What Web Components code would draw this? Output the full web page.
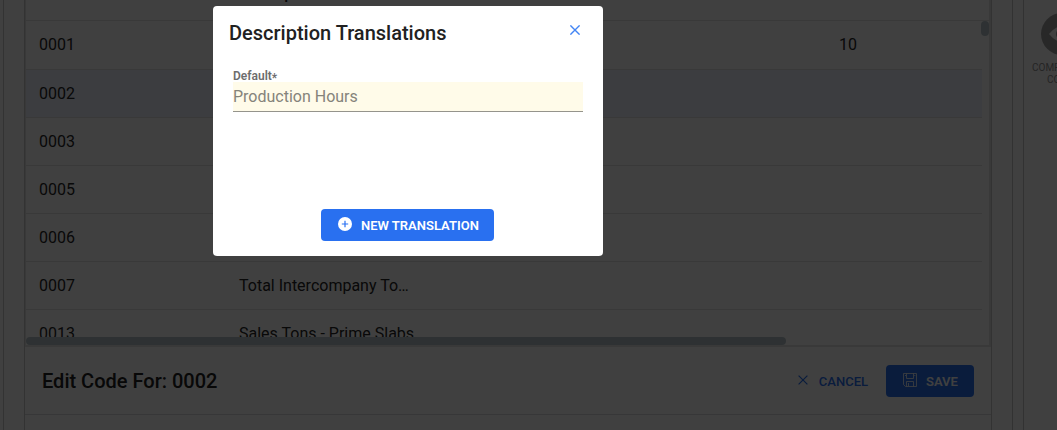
<!DOCTYPE html>
<html lang="en">
<head>
<meta charset="utf-8">
<title>Description Translations</title>
<style>
html,body{margin:0;height:100%;overflow:hidden;background:#fff;font-family:Roboto,sans-serif;color:#212121}
</style>
</head>
<body>
<app-shell></app-shell>
<script>
const define = (name, html) => customElements.define(name, class extends HTMLElement {
  constructor() {
    super();
    const t = document.createElement('template');
    t.innerHTML = html;
    this.attachShadow({mode: 'open'}).append(t.content.cloneNode(true));
  }
});

define('code-row', `<style>
:host{display:flex;box-sizing:border-box;height:48px;width:956px;border-bottom:1px solid #e2e2e4;font-size:16px;line-height:47px;color:#262626}
:host([first]){line-height:45px}
:host([selected]){background:#f0f4ff}
:host([header]){height:21px;width:964px;font-weight:500;line-height:20px;align-items:flex-end}
:host([header]) ::slotted(*){height:36px}
::slotted(*){box-sizing:border-box;flex:none;padding-left:13px;width:200px;white-space:nowrap}
</style><slot></slot>`);

define('code-table', `<style>
:host{display:block;position:relative;box-sizing:border-box;height:347px;border:solid #e2e2e2;border-width:0 2px 2px 1px;overflow:hidden}
.v,.h{position:absolute;background:#b8c4cc;border-radius:4px}
.v{right:0;top:21px;width:8px;height:15px}
.h{left:0;bottom:0;width:760px;height:8px}
.gap{height:1px}
</style><slot name="head"></slot><div class="gap"></div><slot></slot><div class="v"></div><div class="h"></div>`);

define('action-button', `<style>
:host{display:flex;box-sizing:border-box;align-items:center;height:32px;border-radius:4px;font-size:13px;font-weight:500;line-height:32px;color:#2970f3;white-space:nowrap}
:host([primary]){background:#2970f0;color:#fff;font-weight:600}
::slotted(svg){display:block;flex:none}
span{padding-top:1px}
</style><slot name="icon"></slot><span><slot></slot></span>`);

define('edit-bar', `<style>
:host{display:flex;align-items:center;box-sizing:border-box;height:68px;padding:1px 17px 0;border-bottom:1px solid #dcdce0}
h2{margin:0;flex:1;font-size:20px;font-weight:500;line-height:66px}
.cancel{margin-right:18px}.cancel svg{margin:0 11px 2px 0}
.save{width:88px;padding-left:17px}.save svg{margin:0 9px 2px 0}
</style>
<h2>Edit Code For: 0002</h2>
<action-button class="cancel"><svg slot="icon" width="10" height="10" viewBox="0 0 10 10" fill="none" stroke="currentColor" stroke-width="1.2"><path d="M.6.6l8.8 8.8M9.4.6L.6 9.4"/></svg>CANCEL</action-button>
<action-button class="save" primary><svg slot="icon" width="14" height="14" viewBox="0 0 14 14" fill="none" stroke="currentColor"><path d="M.5.5h13v13H2.5l-2-2zM3.5.5v5h7v-5M3.5 13.5v-5h7v5M5.5 10v3M2.5 2v1M11.8 2v1" stroke-opacity=".8"/></svg>SAVE</action-button>`);

define('side-rail', `<style>
:host{display:block;box-sizing:border-box;width:34px;border-left:1px solid #c8c8c8;overflow:hidden;font-size:10px;line-height:12px;color:#929292;padding-top:13px}
svg{display:block;margin-left:17px;width:42px;height:42px}
p{margin:0 0 0 8px;white-space:nowrap}p:first-of-type{margin-top:7px}p:last-child{margin-left:23px}
</style>
<svg viewBox="0 0 42 42"><circle cx="21" cy="21" r="21" fill="#a0a0a0"/><path d="M8 21Q21 5 34 21Q21 37 8 21Z" fill="#fff"/><circle cx="21" cy="21" r="6" fill="#a0a0a0"/></svg>
<p>COMP</p><p>CO</p>`);

define('translation-dialog', `<style>
:host{position:absolute;left:213px;top:6px;width:390px;height:250px;box-sizing:border-box;background:#fff;border-radius:4px;display:flex;flex-direction:column;padding:0 20px}
header{display:flex;justify-content:space-between;margin:14px 2px 0 -4px}
h1{margin:0;font-size:20px;font-weight:500;line-height:27px}
header svg{margin:5px 1px 0 0}
label{display:block;margin-top:21px;font-size:12px;font-weight:600;line-height:16px;color:#6d6d6d;height:14px}
label span{font-size:12px;line-height:1;position:relative;top:2px}
.field{box-sizing:border-box;height:30px;background:#fffbe9;border-bottom:1px solid #95948c;font-size:16px;line-height:29px;color:#85837b}
action-button{margin:97px 0 0 88px;width:173px;padding-left:17px}
action-button svg{margin:0 9px 2px 0}
</style>
<header><h1>Description Translations</h1><svg width="10" height="10" viewBox="0 0 10 10" fill="none" stroke="#4285f4" stroke-width="1.4"><path d="M.4.4l9.2 9.2M9.6.4L.4 9.6"/></svg></header>
<label>Default<span>*</span></label>
<div class="field">Production Hours</div>
<action-button primary><svg slot="icon" width="14" height="14" viewBox="0 0 14 14"><circle cx="7" cy="7" r="7" fill="#fff"/><path d="M7 3.8v6.4M3.8 7h6.4" stroke="#2970f3" stroke-width="1.2"/></svg>NEW TRANSLATION</action-button>`);

define('app-shell', `<style>
:host{display:flex;position:relative;height:430px;overflow:hidden}
.edge{flex:none;box-sizing:border-box;width:4px;border-right:1px solid #ccc}
main{flex:none;box-sizing:border-box;width:968px;margin-left:20px;border:solid #ccc;border-width:0 1px}
.rule{flex:none;width:20px;border-right:1px solid #c8c8c8}
side-rail{flex:none;margin-left:10px}
.scrim{position:absolute;inset:0;background:rgba(0,0,0,.75)}
.ten{padding-left:0;margin-left:413px;width:100px}
</style>
<div class="edge"></div>
<main>
<code-table>
<code-row slot="head" header><span></span><span>Description</span></code-row>
<code-row first><span>0001</span><span></span><span class="ten">10</span></code-row>
<code-row selected><span>0002</span></code-row>
<code-row><span>0003</span></code-row>
<code-row><span>0005</span></code-row>
<code-row><span>0006</span></code-row>
<code-row><span>0007</span><span>Total Intercompany To…</span></code-row>
<code-row><span>0013</span><span>Sales Tons - Prime Slabs</span></code-row>
</code-table>
<edit-bar></edit-bar>
</main>
<div class="rule"></div>
<side-rail></side-rail>
<div class="scrim"></div>
<translation-dialog></translation-dialog>`);
</script>
</body>
</html>
